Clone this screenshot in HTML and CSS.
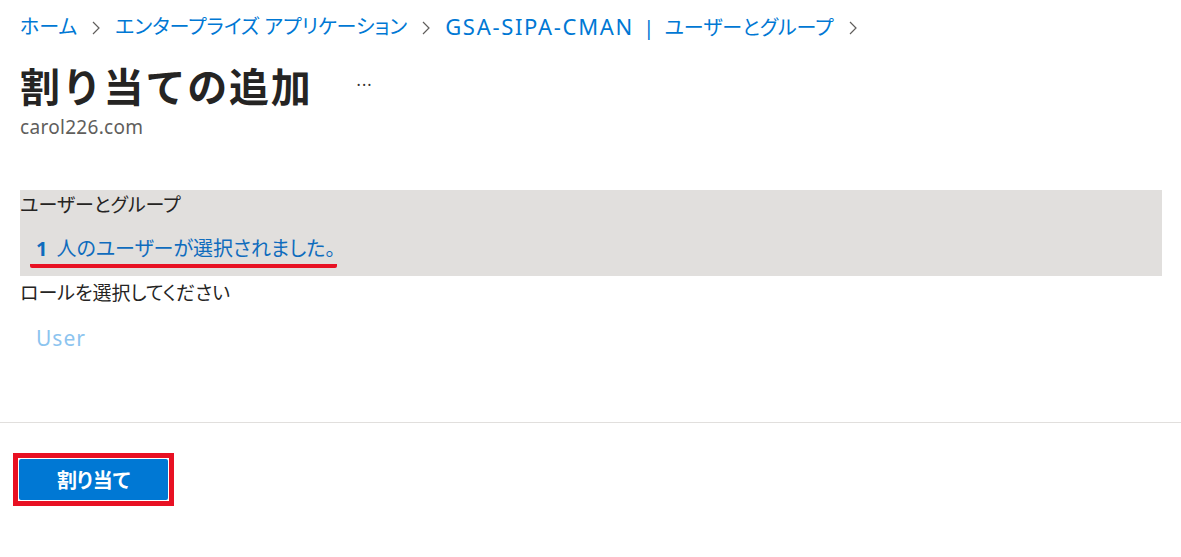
FILE: index.html
```html
<!DOCTYPE html>
<html lang="ja">
<head>
<meta charset="utf-8">
<link rel="stylesheet" href="styles.css">
</head>
<body>
<div class="page">
  <nav class="crumbs">
    <a class="crumb">ホーム</a>
    <svg class="chev" width="10" height="14" viewBox="0 0 10 14"><path d="M2 1 L8 7 L2 13" fill="none" stroke="#605e5c" stroke-width="1.2"/></svg>
    <a class="crumb">エンタープライズ アプリケーション</a>
    <svg class="chev" width="10" height="14" viewBox="0 0 10 14"><path d="M2 1 L8 7 L2 13" fill="none" stroke="#605e5c" stroke-width="1.2"/></svg>
    <a class="crumb"><span class="latin">GSA-SIPA-CMAN</span> <span class="bar">|</span> ユーザーとグループ</a>
    <svg class="chev" width="10" height="14" viewBox="0 0 10 14"><path d="M2 1 L8 7 L2 13" fill="none" stroke="#605e5c" stroke-width="1.2"/></svg>
  </nav>
  <div class="titlerow">
    <h1 class="title">割り当ての追加</h1>
    <span class="more">···</span>
  </div>
  <div class="tenant">carol226.com</div>

  <section class="selbox">
    <div class="label">ユーザーとグループ</div>
    <div class="selected"><span class="mark"><b class="num">1</b>人のユーザーが選択されました。</span></div>
  </section>
  <div class="label role">ロールを選択してください</div>
  <div class="rolevalue">User</div>
</div>
<footer class="footer">
  <div class="hl"><button class="btn">割り当て</button></div>
</footer>
</body>
</html>
```
FILE: styles.css
```css
* { box-sizing: border-box; }
html, body { margin: 0; padding: 0; background: #fff; }
body {
  font-family: "Noto Sans", "Noto Sans CJK JP", sans-serif;
  font-feature-settings: "palt";
  color: #323130;
  width: 1181px;
  height: 557px;
  overflow: hidden;
}
.page { padding: 0 19px 0 20px; height: 422px; }
.crumbs {
  display: flex;
  align-items: center;
  height: 54px;
  gap: 14px;
}
.crumb {
  color: #0078d4;
  font-size: 20px;
  line-height: 26px;
  white-space: pre;
}
.latin { font-size: 22px; letter-spacing: 1.7px; }
.bar { margin: 0 5px 0 4px; }
.chev { display: block; margin-top: 2px; }
.titlerow { display: flex; align-items: center; height: 66px; }
.title {
  margin: 0;
  font-size: 40px;
  font-weight: 700;
  color: #252423;
  line-height: 50px;
  font-feature-settings: normal;
  letter-spacing: 1.8px;
}
.more {
  margin-left: 44px;
  font-size: 16px;
  color: #323130;
  letter-spacing: 1px;
  margin-top: -4px;
}
.tenant {
  font-size: 19px;
  color: #605e5c;
  line-height: 22px;
  margin-top: -4px;
  letter-spacing: 0.3px;
}
.selbox {
  margin-top: 52px;
  background: #e1dfdd;
  height: 86px;
  padding-top: 3px;
}
.label { font-size: 19px; line-height: 24px; color: #252423; }
.selected { padding: 20px 0 0 10px; }
.mark {
  display: inline-block;
  color: #0f6cbd;
  font-size: 20px;
  line-height: 24px;
  padding: 0 2px 3px 6px;
  border-bottom: 4px solid #e81123;
  border-radius: 0 0 2px 2px;
}
.num { font-weight: 700; margin-right: 9px; }
.role { margin-top: 5px; }
.rolevalue {
  color: #8cc4ef;
  font-size: 21px;
  line-height: 28px;
  letter-spacing: 1px;
  margin: 19px 0 0 16px;
}
.footer {
  border-top: 1px solid #e1dfdd;
  padding: 30px 0 0 13px;
}
.hl {
  display: inline-block;
  border: 5px solid #e81123;
  padding: 1px;
  background: #fff;
}
.btn {
  display: block;
  width: 149px;
  height: 41px;
  background: #0078d4;
  color: #fff;
  border: none;
  border-radius: 2px;
  font-family: "Noto Sans CJK JP", sans-serif;
  font-feature-settings: "palt";
  font-size: 20px;
  font-weight: 700;
  padding: 0;
}
```
